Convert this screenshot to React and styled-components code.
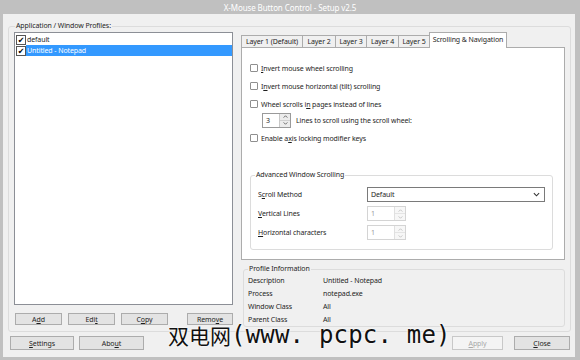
import React from "react";
import styled, { createGlobalStyle } from "styled-components";

const GlobalStyle = createGlobalStyle`
  html, body { margin: 0; padding: 0; background: #bfbfbf; }
  body { font-family: "Noto Sans", "DejaVu Sans", sans-serif; font-size: 7px; letter-spacing: -0.1px; color: #1e1e1e; }
  u { text-decoration-thickness: 1px; text-underline-offset: 1px; }
`;

function SpinBox({ value, width, disabled }) {
  return (
    <Spinner width={width} disabled={disabled}>
      <SpinValue disabled={disabled}>{value}</SpinValue>
      <SpinButtons disabled={disabled}>
        <SpinArrow disabled={disabled}>
          <svg viewBox="0 0 6 4" width="5" height="3">
            <path d="M0.5 3.5 L3 1 L5.5 3.5" fill="none" stroke="currentColor" strokeWidth="1" />
          </svg>
        </SpinArrow>
        <SpinArrow down disabled={disabled}>
          <svg viewBox="0 0 6 4" width="5" height="3">
            <path d="M0.5 0.5 L3 3 L5.5 0.5" fill="none" stroke="currentColor" strokeWidth="1" />
          </svg>
        </SpinArrow>
      </SpinButtons>
    </Spinner>
  );
}

export default function App() {
  return (
    <Window>
      <GlobalStyle />
      <TitleBar>X-Mouse Button Control - Setup v2.5</TitleBar>
      <Client>
        <MainGroup>
          <Legend left={6}>Application / Window Profiles:</Legend>
          <LeftCol>
            <ListBox>
              <ListItem>
                <ListCheck>✔</ListCheck>
                <ItemLabel>default</ItemLabel>
              </ListItem>
              <ListItem>
                <ListCheck>✔</ListCheck>
                <ItemLabel selected>Untitled - Notepad</ItemLabel>
              </ListItem>
            </ListBox>
            <ButtonRow>
              <Button width={47}>A<u>d</u>d</Button>
              <Button width={47}>Edi<u>t</u></Button>
              <Button width={47}>C<u>o</u>py</Button>
              <Button width={46} push>Remo<u>v</u>e</Button>
            </ButtonRow>
          </LeftCol>

          <RightCol>
            <TabStrip>
              <Tab width={62} first>Layer 1 (Default)</Tab>
              <Tab width={33}>Layer 2</Tab>
              <Tab width={31}>Layer 3</Tab>
              <Tab width={32}>Layer 4</Tab>
              <Tab width={31}>Layer 5</Tab>
              <Tab width={78} active>Scrolling &amp; Navigation</Tab>
            </TabStrip>
            <Panel>
              <CheckRow>
                <Box />
                <span><u>I</u>nvert mouse wheel scrolling</span>
              </CheckRow>
              <CheckRow>
                <Box />
                <span>I<u>n</u>vert mouse horizontal (tilt) scrolling</span>
              </CheckRow>
              <CheckRow>
                <Box />
                <span>Wheel scrolls i<u>n</u> pages instead of lines</span>
              </CheckRow>
              <SpinRow>
                <SpinBox value="3" width={29} />
                <span>Lines to scroll using the scroll wheel:</span>
              </SpinRow>
              <CheckRow gap>
                <Box />
                <span>Enable a<u>x</u>is locking modifier keys</span>
              </CheckRow>

              <AdvGroup>
                <Legend left={4}>Advanced Window Scrolling</Legend>
                <FieldGrid>
                  <FieldLabel>S<u>c</u>roll Method</FieldLabel>
                  <Select>
                    <span>Default</span>
                    <Chevron viewBox="0 0 8 5">
                      <path d="M1 1 L4 4 L7 1" fill="none" stroke="#333" strokeWidth="1.2" />
                    </Chevron>
                  </Select>
                  <FieldLabel><u>V</u>ertical Lines</FieldLabel>
                  <SpinBox value="1" width={39} disabled />
                  <FieldLabel><u>H</u>orizontal characters</FieldLabel>
                  <SpinBox value="1" width={39} disabled />
                </FieldGrid>
              </AdvGroup>
            </Panel>

            <InfoGroup>
              <Legend left={4}>Profile Information</Legend>
              <InfoGrid>
                <span>Description</span><span>Untitled - Notepad</span>
                <span>Process</span><span>notepad.exe</span>
                <span>Window Class</span><span>All</span>
                <span>Parent Class</span><span>All</span>
              </InfoGrid>
            </InfoGroup>
          </RightCol>
        </MainGroup>

        <BottomBar>
          <Button width={64} big offset={2}><u>S</u>ettings</Button>
          <Button width={65} big offset={5}>Abo<u>u</u>t</Button>
          <Button width={51} big push disabled><u>A</u>pply</Button>
          <Button width={56} big offset={11}><u>C</u>lose</Button>
        </BottomBar>
      </Client>

      <Watermark>
        <Han>双电网</Han>
        <Url>(www. pcpc. me)</Url>
      </Watermark>
    </Window>
  );
}

const Window = styled.div`
  position: relative;
  width: 580px;
  height: 360px;
  background: #c0c0c0;
  display: flex;
  flex-direction: column;
  overflow: hidden;
`;

const TitleBar = styled.div`
  height: 14px;
  display: flex;
  align-items: center;
  justify-content: center;
  color: #ffffff;
  font-size: 8px;
`;

const Client = styled.div`
  flex: 1;
  margin: 0 5px 3px 3px;
  background: #f0f0f0;
  padding: 12px 4px 0 5px;
  display: flex;
  flex-direction: column;
`;

const MainGroup = styled.div`
  position: relative;
  height: 306px;
  box-sizing: border-box;
  border: 1px solid #dcdcdc;
  border-radius: 3px;
  padding: 5px 5px 0 5px;
  display: flex;
  align-items: flex-start;
  gap: 8px;
`;

const Legend = styled.div`
  position: absolute;
  top: -6px;
  left: ${(p) => p.left}px;
  padding: 0 1px;
  line-height: 10px;
  background: #f0f0f0;
  white-space: nowrap;
`;

const LeftCol = styled.div`
  width: 219px;
  display: flex;
  flex-direction: column;
`;

const ListBox = styled.div`
  height: 273px;
  box-sizing: border-box;
  border: 1px solid #8c8f96;
  background: #ffffff;
  padding: 1px 0 0 0;
`;

const ListItem = styled.div`
  height: 11px;
  display: flex;
  align-items: center;
`;

const ListCheck = styled.div`
  width: 8px;
  height: 8px;
  margin-left: 1px;
  border: 1px solid #555;
  background: #fff;
  font-size: 8px;
  line-height: 8px;
  text-align: center;
  font-weight: bold;
  color: #000;
`;

const ItemLabel = styled.div`
  flex: 1;
  height: 11px;
  line-height: 11px;
  padding-left: 1px;
  background: ${(p) => (p.selected ? "#3399ff" : "transparent")};
  color: ${(p) => (p.selected ? "#ffffff" : "#1e1e1e")};
`;

const ButtonRow = styled.div`
  margin-top: 8px;
  display: flex;
  gap: 6px;
  padding-left: 1px;
`;

const Button = styled.div`
  width: ${(p) => p.width}px;
  height: ${(p) => (p.big ? 14 : 12)}px;
  box-sizing: border-box;
  margin-left: ${(p) => (p.push ? "auto" : `${p.offset || 0}px`)};
  border: 1px solid ${(p) => (p.disabled ? "#c8c8c8" : "#acacac")};
  background: ${(p) => (p.disabled ? "#f4f4f4" : "#e3e3e3")};
  color: ${(p) => (p.disabled ? "#a8a8a8" : "#1e1e1e")};
  display: flex;
  align-items: center;
  justify-content: center;
  line-height: 1;
`;

const RightCol = styled.div`
  width: 324px;
  display: flex;
  flex-direction: column;
`;

const TabStrip = styled.div`
  height: 15px;
  display: flex;
  align-items: flex-end;
  position: relative;
  z-index: 1;
`;

const Tab = styled.div`
  width: ${(p) => p.width}px;
  height: ${(p) => (p.active ? 16 : 12)}px;
  box-sizing: border-box;
  margin-bottom: ${(p) => (p.active ? -1 : 0)}px;
  border-top: 1px solid #acacac;
  border-right: 1px solid #acacac;
  border-left: ${(p) => (p.first || p.active ? "1px solid #acacac" : "none")};
  margin-left: ${(p) => (p.active ? -1 : 0)}px;
  background: ${(p) => (p.active ? "#ffffff" : "#f0f0f0")};
  display: flex;
  align-items: ${(p) => (p.active ? "flex-start" : "center")};
  padding-top: ${(p) => (p.active ? 3 : 0)}px;
  justify-content: center;
  white-space: nowrap;
  line-height: 1;
`;

const Panel = styled.div`
  height: 213px;
  box-sizing: border-box;
  border: 1px solid #acacac;
  background: #ffffff;
  padding: 11px 10px 0 8px;
  display: flex;
  flex-direction: column;
`;

const CheckRow = styled.div`
  height: 18px;
  margin-top: ${(p) => (p.gap ? 2 : 0)}px;
  display: flex;
  align-items: center;
  gap: 3px;
`;

const Box = styled.div`
  width: 8px;
  height: 8px;
  box-sizing: border-box;
  border: 1px solid #8f8f8f;
  border-radius: 1px;
  background: #ffffff;
`;

const SpinRow = styled.div`
  height: 14px;
  padding-left: 12px;
  display: flex;
  align-items: center;
  gap: 5px;
`;

const Spinner = styled.div`
  width: ${(p) => p.width}px;
  height: 15px;
  box-sizing: border-box;
  border: 1px solid ${(p) => (p.disabled ? "#d4d4d4" : "#9a9a9a")};
  background: #ffffff;
  display: flex;
`;

const SpinValue = styled.div`
  flex: 1;
  padding-left: 3px;
  display: flex;
  align-items: center;
  color: ${(p) => (p.disabled ? "#9a9a9a" : "#1e1e1e")};
`;

const SpinButtons = styled.div`
  width: 10px;
  display: flex;
  flex-direction: column;
  border-left: 1px solid ${(p) => (p.disabled ? "#e0e0e0" : "#c8c8c8")};
`;

const SpinArrow = styled.div`
  flex: 1;
  display: flex;
  align-items: center;
  justify-content: center;
  background: ${(p) => (p.disabled ? "#f7f7f7" : "#ececec")};
  border-bottom: ${(p) => (p.down ? "none" : `1px solid ${p.disabled ? "#e4e4e4" : "#d0d0d0"}`)};
  color: ${(p) => (p.disabled ? "#b5b5b5" : "#444")};
`;

const AdvGroup = styled.div`
  position: relative;
  margin-top: 28px;
  width: 303px;
  height: 75px;
  box-sizing: border-box;
  border: 1px solid #dcdcdc;
  border-radius: 3px;
  padding: 11px 0 0 7px;
  background: #ffffff;

  ${Legend} {
    background: #ffffff;
  }
`;

const FieldGrid = styled.div`
  display: grid;
  grid-template-columns: 109px 178px;
  grid-auto-rows: 15px;
  row-gap: 4px;
  align-items: center;
  justify-items: start;
`;

const FieldLabel = styled.span`
  white-space: nowrap;
`;

const Select = styled.div`
  width: 178px;
  height: 15px;
  box-sizing: border-box;
  border: 1px solid #7a7a7a;
  background: #ffffff;
  display: flex;
  align-items: center;
  justify-content: space-between;
  padding: 0 4px 0 3px;
`;

const Chevron = styled.svg`
  width: 7px;
  height: 5px;
`;

const InfoGroup = styled.div`
  position: relative;
  margin: 9px 0 0 2px;
  height: 58px;
  box-sizing: border-box;
  border: 1px solid #dcdcdc;
  border-radius: 3px;
  padding: 4px 0 0 4px;
`;

const InfoGrid = styled.div`
  display: grid;
  grid-template-columns: 75px auto;
  grid-auto-rows: 13px;
  align-items: center;
`;

const BottomBar = styled.div`
  margin-top: 4px;
  display: flex;
  padding-right: 1px;
`;

const Watermark = styled.div`
  position: absolute;
  left: 168px;
  top: 323px;
  display: flex;
  align-items: center;
  color: #111;
  white-space: nowrap;
  letter-spacing: 0;
  text-shadow: 0 0 2px #fff, 0 0 2px #fff;
`;

const Han = styled.span`
  font-family: "Noto Sans CJK SC", sans-serif;
  font-size: 21px;
  line-height: 24px;
`;

const Url = styled.span`
  font-family: "DejaVu Sans Mono", monospace;
  font-size: 24px;
  line-height: 24px;
  letter-spacing: 0.2px;
`;
